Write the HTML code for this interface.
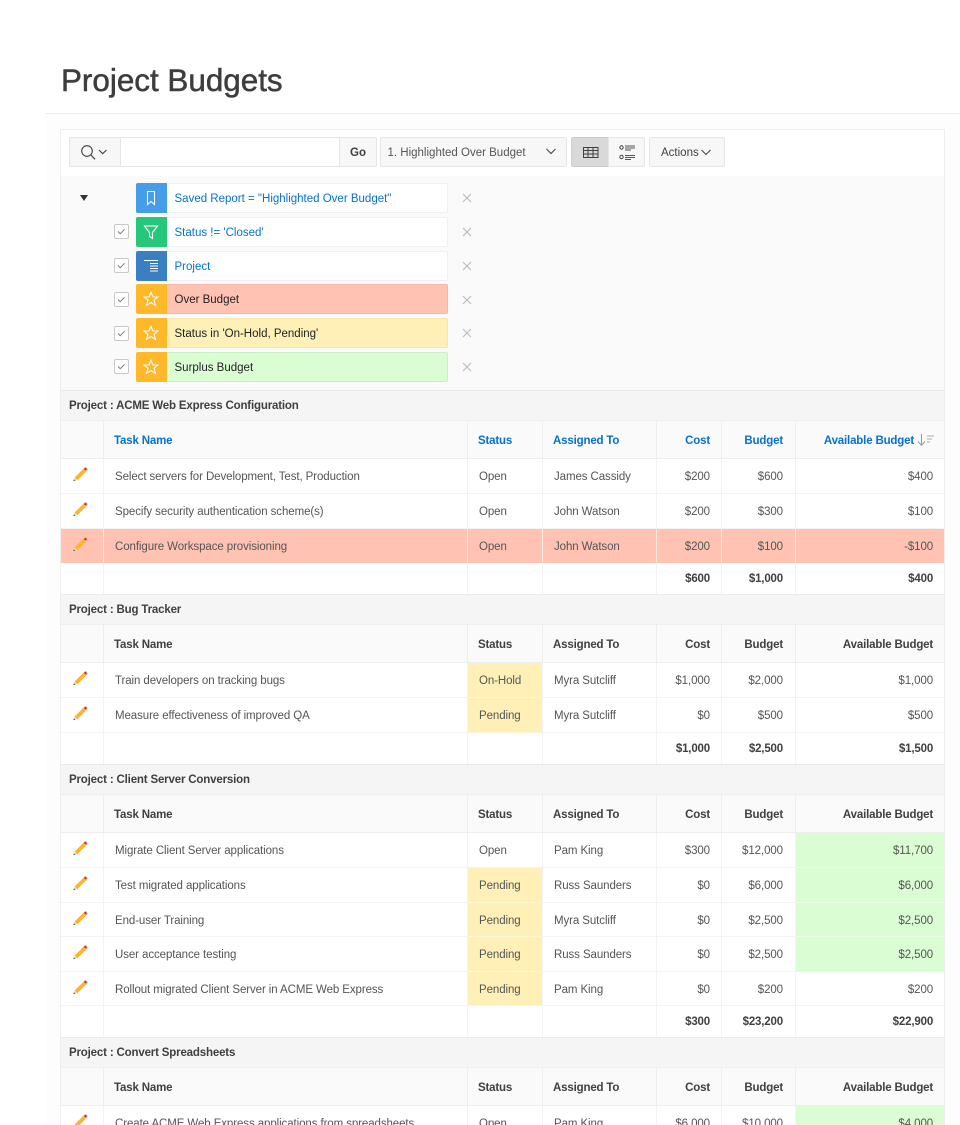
<!DOCTYPE html>
<html lang="en"><head><meta charset="utf-8"><title>Project Budgets</title>
<style>
html,body{margin:0;padding:0;background:#fff;overflow:hidden;height:1125px}
#w{width:960px;height:1125px;position:relative;overflow:hidden;font-family:"Liberation Sans",Arial,sans-serif;color:#404040;font-size:11.5px}
.abs,.btn,.chip,.ic,.cb,.x{position:absolute;box-sizing:border-box}
h1{position:absolute;left:61px;top:61px;margin:0;font-size:31.4px;line-height:40px;font-weight:400;color:#3d3d3d;-webkit-text-stroke:.5px #3d3d3d;white-space:nowrap}
.btn{height:30px;top:137px;background:#f7f7f7;border:1px solid #e6e6e6;line-height:30px;color:#404040}
.chip{left:167px;width:281px;height:30px;background:#fff;border:1px solid #f0f0f0;border-left:0;padding-left:7.500px;line-height:30px;color:#0572ce;border-radius:0 2px 2px 0;white-space:nowrap}
.ic{left:136px;width:31px;height:30px;border-radius:2px 0 0 2px}
.ic svg{position:absolute;left:7px;top:7px}
.cb{left:113.500px;width:15px;height:15px;background:#fff;border:1px solid #c8c8c8;border-radius:2px}
.x{left:462px;width:10px;height:10px}
table{position:absolute;left:61px;top:390px;width:883px;border-collapse:separate;border-spacing:0;table-layout:fixed;font-size:11.5px}
td,th{box-sizing:border-box;padding:2px 11px 0;border-right:1px solid #f3f3f3;border-bottom:1px solid #f3f3f3;white-space:nowrap;overflow:hidden;background:#fff;font-weight:400;text-align:left;color:#555;letter-spacing:-.09px}
td:last-child,th:last-child{border-right:0}
td:nth-child(6),th:nth-child(6){padding-right:12px}
th{background:#fafafa;font-weight:700;color:#404040;letter-spacing:-.17px;border-right-color:#eee;border-bottom-color:#eee;padding-left:10px}
.g td{background:#f5f5f5;font-weight:700;color:#404040;letter-spacing:-.17px;padding:0 0 0 8px;border-bottom:1px solid #eee;border-top:1px solid #eaeaea;border-right:0}
.r{text-align:right}
.t td{font-weight:700;color:#404040;letter-spacing:-.17px;border-bottom:0;padding-top:0}
.l th{color:#0572ce}
td.p{padding:0 0 0 10.500px;vertical-align:middle}
.p svg{display:block;margin-top:-4px}
.o td{background:#ffc2b3;border-right-color:#ffe9e3;border-bottom-color:#ffc2b3}
.y{background:#fff0b8!important;border-bottom-color:#fff6d8!important}
.s{background:#dbfdd4!important;border-bottom-color:#e6fde1!important}
</style></head><body><div id="w">
<svg width="0" height="0" style="position:absolute"><defs>
<symbol id="pen" viewBox="0 0 18 18"><path d="M3 13 13 3l3 3L6 16Z" fill="#fdb42e"/><path d="M3 13 1.500 17 6 16Z" fill="#f4d9b0"/><path d="M1.500 17 2.200 15 3.700 16.500Z" fill="#444"/><path d="M13 3l1.200-1.200a1.500 1.500 0 0 1 2 0l1 1a1.500 1.500 0 0 1 0 2L16 6Z" fill="#e8907c"/><circle cx="15" cy="3.500" r="1" fill="#7a1f10"/></symbol>
<symbol id="star" viewBox="0 0 16 16"><path d="M8 1.300 10 6h5l-4 3.200 1.500 5.200L8 11.500l-4.500 2.900L5 9.200 1 6h5Z" fill="none" stroke="#fff" stroke-width="1.100"/></symbol>
<symbol id="chk" viewBox="0 0 15 15"><path d="M3.500 7.500 6 10l5-5" fill="none" stroke="#777" stroke-width="1.100"/></symbol>
<symbol id="xx" viewBox="0 0 10 10"><path d="M1 1l8 8M9 1 1 9" stroke="#bdbdbd" stroke-width="1.200"/></symbol>
</defs></svg>

<div class="abs" style="left:46px;top:113px;width:914px;height:1012px;background:#fdfdfd;border-top:1px solid #ebebeb"></div>
<h1>Project Budgets</h1>

<div class="abs" style="left:60px;top:129px;width:885px;height:1000px;background:#fff;border:1px solid #efefef"></div>
<div class="abs" style="left:61px;top:176px;width:883px;height:214px;background:#fafafa"></div>

<div class="btn" style="left:69px;width:52px;border-radius:2px 0 0 2px">
<svg style="position:absolute;left:10px;top:5px" width="40" height="18" viewBox="0 0 40 18"><circle cx="7" cy="8" r="5.300" fill="none" stroke="#444" stroke-width="1.100"/><path d="M11 12 15 16.300" stroke="#444" stroke-width="1.200"/><path d="M19 7l3.700 3.700L26.500 7" fill="none" stroke="#444" stroke-width="1.100"/></svg></div>
<div class="btn" style="left:120px;width:220px;background:#fff"></div>
<div class="btn" style="left:339px;width:38px;text-align:center;font-weight:700;border-radius:0 2px 2px 0">Go</div>
<div class="btn" style="left:380px;width:187px;padding-left:6.500px;border-radius:2px;color:#555">1. Highlighted Over Budget
<svg style="position:absolute;right:10px;top:10px" width="10" height="7" viewBox="0 0 10 7"><path d="M.5 1 5 5.500 9.500 1" fill="none" stroke="#444" stroke-width="1.100"/></svg></div>
<div class="btn" style="left:571px;width:38px;background:#d9d9d9;border-color:#cdcdcd;border-radius:2px 0 0 2px">
<svg style="position:absolute;left:11px;top:9px" width="16" height="11" viewBox="0 0 16 11"><path d="M.5.500h14.500v10H.5ZM.5 3.500h14.500M.5 7h14.500M5 .5v10M10 .5v10" fill="none" stroke="#404040"/></svg></div>
<div class="btn" style="left:608px;width:37px;border-radius:0 2px 2px 0">
<svg style="position:absolute;left:10px;top:7px" width="17" height="16" viewBox="0 0 17 16"><circle cx="2.500" cy="2.500" r="1.700" fill="none" stroke="#444"/><circle cx="2.500" cy="12" r="1.700" fill="none" stroke="#444"/><path d="M6 1h10M6 3h10M6 5h6M6 10.500h10M6 12.500h10M6 14.500h6" stroke="#555"/></svg></div>
<div class="btn" style="left:649px;width:76px;padding-left:11px;border-radius:2px">Actions
<svg style="position:absolute;left:51px;top:11px" width="10" height="7" viewBox="0 0 10 7"><path d="M.5 1 5 5.500 9.500 1" fill="none" stroke="#444" stroke-width="1.100"/></svg></div>

<svg class="abs" style="left:80px;top:195px" width="8" height="6" viewBox="0 0 8 6"><path d="M0 0h8L4 6Z" fill="#333"/></svg>

<div class="ic" style="top:183px;background:#459ce8"><svg width="16" height="16" viewBox="0 0 16 16"><path d="M4.500 1.500h7v13L8 11.500l-3.500 3Z" fill="none" stroke="#fff" stroke-width="1.100"/></svg></div>
<div class="chip" style="top:183px">Saved Report = "Highlighted Over Budget"</div>
<svg class="x" style="top:193px"><use href="#xx"/></svg>

<div class="cb" style="top:224px"><svg width="13" height="13"><use href="#chk"/></svg></div>
<div class="ic" style="top:217px;background:#27c77b"><svg width="16" height="16" viewBox="0 0 16 16"><path d="M1.500 2h13L9.500 8.500v6l-3-2v-4Z" fill="none" stroke="#fff" stroke-width="1.100"/></svg></div>
<div class="chip" style="top:217px">Status != 'Closed'</div>
<svg class="x" style="top:227px"><use href="#xx"/></svg>

<div class="cb" style="top:258px"><svg width="13" height="13"><use href="#chk"/></svg></div>
<div class="ic" style="top:251px;background:#3a7fc1"><svg width="16" height="16" viewBox="0 0 16 16"><path d="M1 2.500h14M7 5.500h8M7 8h8M7 10.500h8M7 13h8" stroke="#fff"/></svg></div>
<div class="chip" style="top:251px">Project</div>
<svg class="x" style="top:261px"><use href="#xx"/></svg>

<div class="cb" style="top:292px"><svg width="13" height="13"><use href="#chk"/></svg></div>
<div class="ic" style="top:284px;background:#ffb829"><svg width="16" height="16"><use href="#star"/></svg></div>
<div class="chip" style="top:284px;background:#ffc2b3;border-color:#f4b6a6;color:#222">Over Budget</div>
<svg class="x" style="top:295px"><use href="#xx"/></svg>

<div class="cb" style="top:326px"><svg width="13" height="13"><use href="#chk"/></svg></div>
<div class="ic" style="top:318px;background:#ffb829"><svg width="16" height="16"><use href="#star"/></svg></div>
<div class="chip" style="top:318px;background:#fff0b8;border-color:#f6e6ac;color:#222">Status in 'On-Hold, Pending'</div>
<svg class="x" style="top:328px"><use href="#xx"/></svg>

<div class="cb" style="top:359px"><svg width="13" height="13"><use href="#chk"/></svg></div>
<div class="ic" style="top:352px;background:#ffb829"><svg width="16" height="16"><use href="#star"/></svg></div>
<div class="chip" style="top:352px;background:#dbfdd4;border-color:#c9efc2;color:#222">Surplus Budget</div>
<svg class="x" style="top:362px"><use href="#xx"/></svg>

<table>
<colgroup><col style="width:43px"><col style="width:364px"><col style="width:75px"><col style="width:114px"><col style="width:65px"><col style="width:74px"><col style="width:148px"></colgroup>
<tr class="g" style="height:31px"><td colspan="7">Project : ACME Web Express Configuration</td></tr>
<tr class="l" style="height:38px"><th></th><th>Task Name</th><th>Status</th><th>Assigned To</th><th class="r">Cost</th><th class="r">Budget</th><th class="r" style="padding-right:10px">Available Budget <svg width="17" height="12" viewBox="0 0 17 12" style="vertical-align:-2px"><path d="M4.500 0v11M1 7.500l3.500 3.800L8 7.500" fill="none" stroke="#999"/><path d="M10 2h7M10 5h5M10 8h3" stroke="#aaa"/></svg></th></tr>
<tr style="height:35px"><td class="p"><svg width="16" height="16"><use href="#pen"/></svg></td><td>Select servers for Development, Test, Production</td><td>Open</td><td>James Cassidy</td><td class="r">$200</td><td class="r">$600</td><td class="r">$400</td></tr>
<tr style="height:35px"><td class="p"><svg width="16" height="16"><use href="#pen"/></svg></td><td>Specify security authentication scheme(s)</td><td>Open</td><td>John Watson</td><td class="r">$200</td><td class="r">$300</td><td class="r">$100</td></tr>
<tr class="o" style="height:34px"><td class="p"><svg width="16" height="16"><use href="#pen"/></svg></td><td>Configure Workspace provisioning</td><td>Open</td><td>John Watson</td><td class="r">$200</td><td class="r">$100</td><td class="r">-$100</td></tr>
<tr class="t" style="height:31px"><td></td><td></td><td></td><td></td><td class="r">$600</td><td class="r">$1,000</td><td class="r">$400</td></tr>

<tr class="g" style="height:31px"><td colspan="7">Project : Bug Tracker</td></tr>
<tr style="height:38px"><th></th><th>Task Name</th><th>Status</th><th>Assigned To</th><th class="r">Cost</th><th class="r">Budget</th><th class="r">Available Budget</th></tr>
<tr style="height:35px"><td class="p"><svg width="16" height="16"><use href="#pen"/></svg></td><td>Train developers on tracking bugs</td><td class="y">On-Hold</td><td>Myra Sutcliff</td><td class="r">$1,000</td><td class="r">$2,000</td><td class="r">$1,000</td></tr>
<tr style="height:35px"><td class="p"><svg width="16" height="16"><use href="#pen"/></svg></td><td>Measure effectiveness of improved QA</td><td class="y">Pending</td><td>Myra Sutcliff</td><td class="r">$0</td><td class="r">$500</td><td class="r">$500</td></tr>
<tr class="t" style="height:31px"><td></td><td></td><td></td><td></td><td class="r">$1,000</td><td class="r">$2,500</td><td class="r">$1,500</td></tr>

<tr class="g" style="height:31px"><td colspan="7">Project : Client Server Conversion</td></tr>
<tr style="height:38px"><th></th><th>Task Name</th><th>Status</th><th>Assigned To</th><th class="r">Cost</th><th class="r">Budget</th><th class="r">Available Budget</th></tr>
<tr style="height:35px"><td class="p"><svg width="16" height="16"><use href="#pen"/></svg></td><td>Migrate Client Server applications</td><td>Open</td><td>Pam King</td><td class="r">$300</td><td class="r">$12,000</td><td class="r s">$11,700</td></tr>
<tr style="height:35px"><td class="p"><svg width="16" height="16"><use href="#pen"/></svg></td><td>Test migrated applications</td><td class="y">Pending</td><td>Russ Saunders</td><td class="r">$0</td><td class="r">$6,000</td><td class="r s">$6,000</td></tr>
<tr style="height:34px"><td class="p"><svg width="16" height="16"><use href="#pen"/></svg></td><td>End-user Training</td><td class="y">Pending</td><td>Myra Sutcliff</td><td class="r">$0</td><td class="r">$2,500</td><td class="r s">$2,500</td></tr>
<tr style="height:35px"><td class="p"><svg width="16" height="16"><use href="#pen"/></svg></td><td>User acceptance testing</td><td class="y">Pending</td><td>Russ Saunders</td><td class="r">$0</td><td class="r">$2,500</td><td class="r s">$2,500</td></tr>
<tr style="height:34px"><td class="p"><svg width="16" height="16"><use href="#pen"/></svg></td><td>Rollout migrated Client Server in ACME Web Express</td><td class="y">Pending</td><td>Pam King</td><td class="r">$0</td><td class="r">$200</td><td class="r">$200</td></tr>
<tr class="t" style="height:31px"><td></td><td></td><td></td><td></td><td class="r">$300</td><td class="r">$23,200</td><td class="r">$22,900</td></tr>

<tr class="g" style="height:31px"><td colspan="7">Project : Convert Spreadsheets</td></tr>
<tr style="height:38px"><th></th><th>Task Name</th><th>Status</th><th>Assigned To</th><th class="r">Cost</th><th class="r">Budget</th><th class="r">Available Budget</th></tr>
<tr style="height:35px"><td class="p"><svg width="16" height="16"><use href="#pen"/></svg></td><td>Create ACME Web Express applications from spreadsheets</td><td>Open</td><td>Pam King</td><td class="r">$6,000</td><td class="r">$10,000</td><td class="r s">$4,000</td></tr>
</table>
</div></body></html>
